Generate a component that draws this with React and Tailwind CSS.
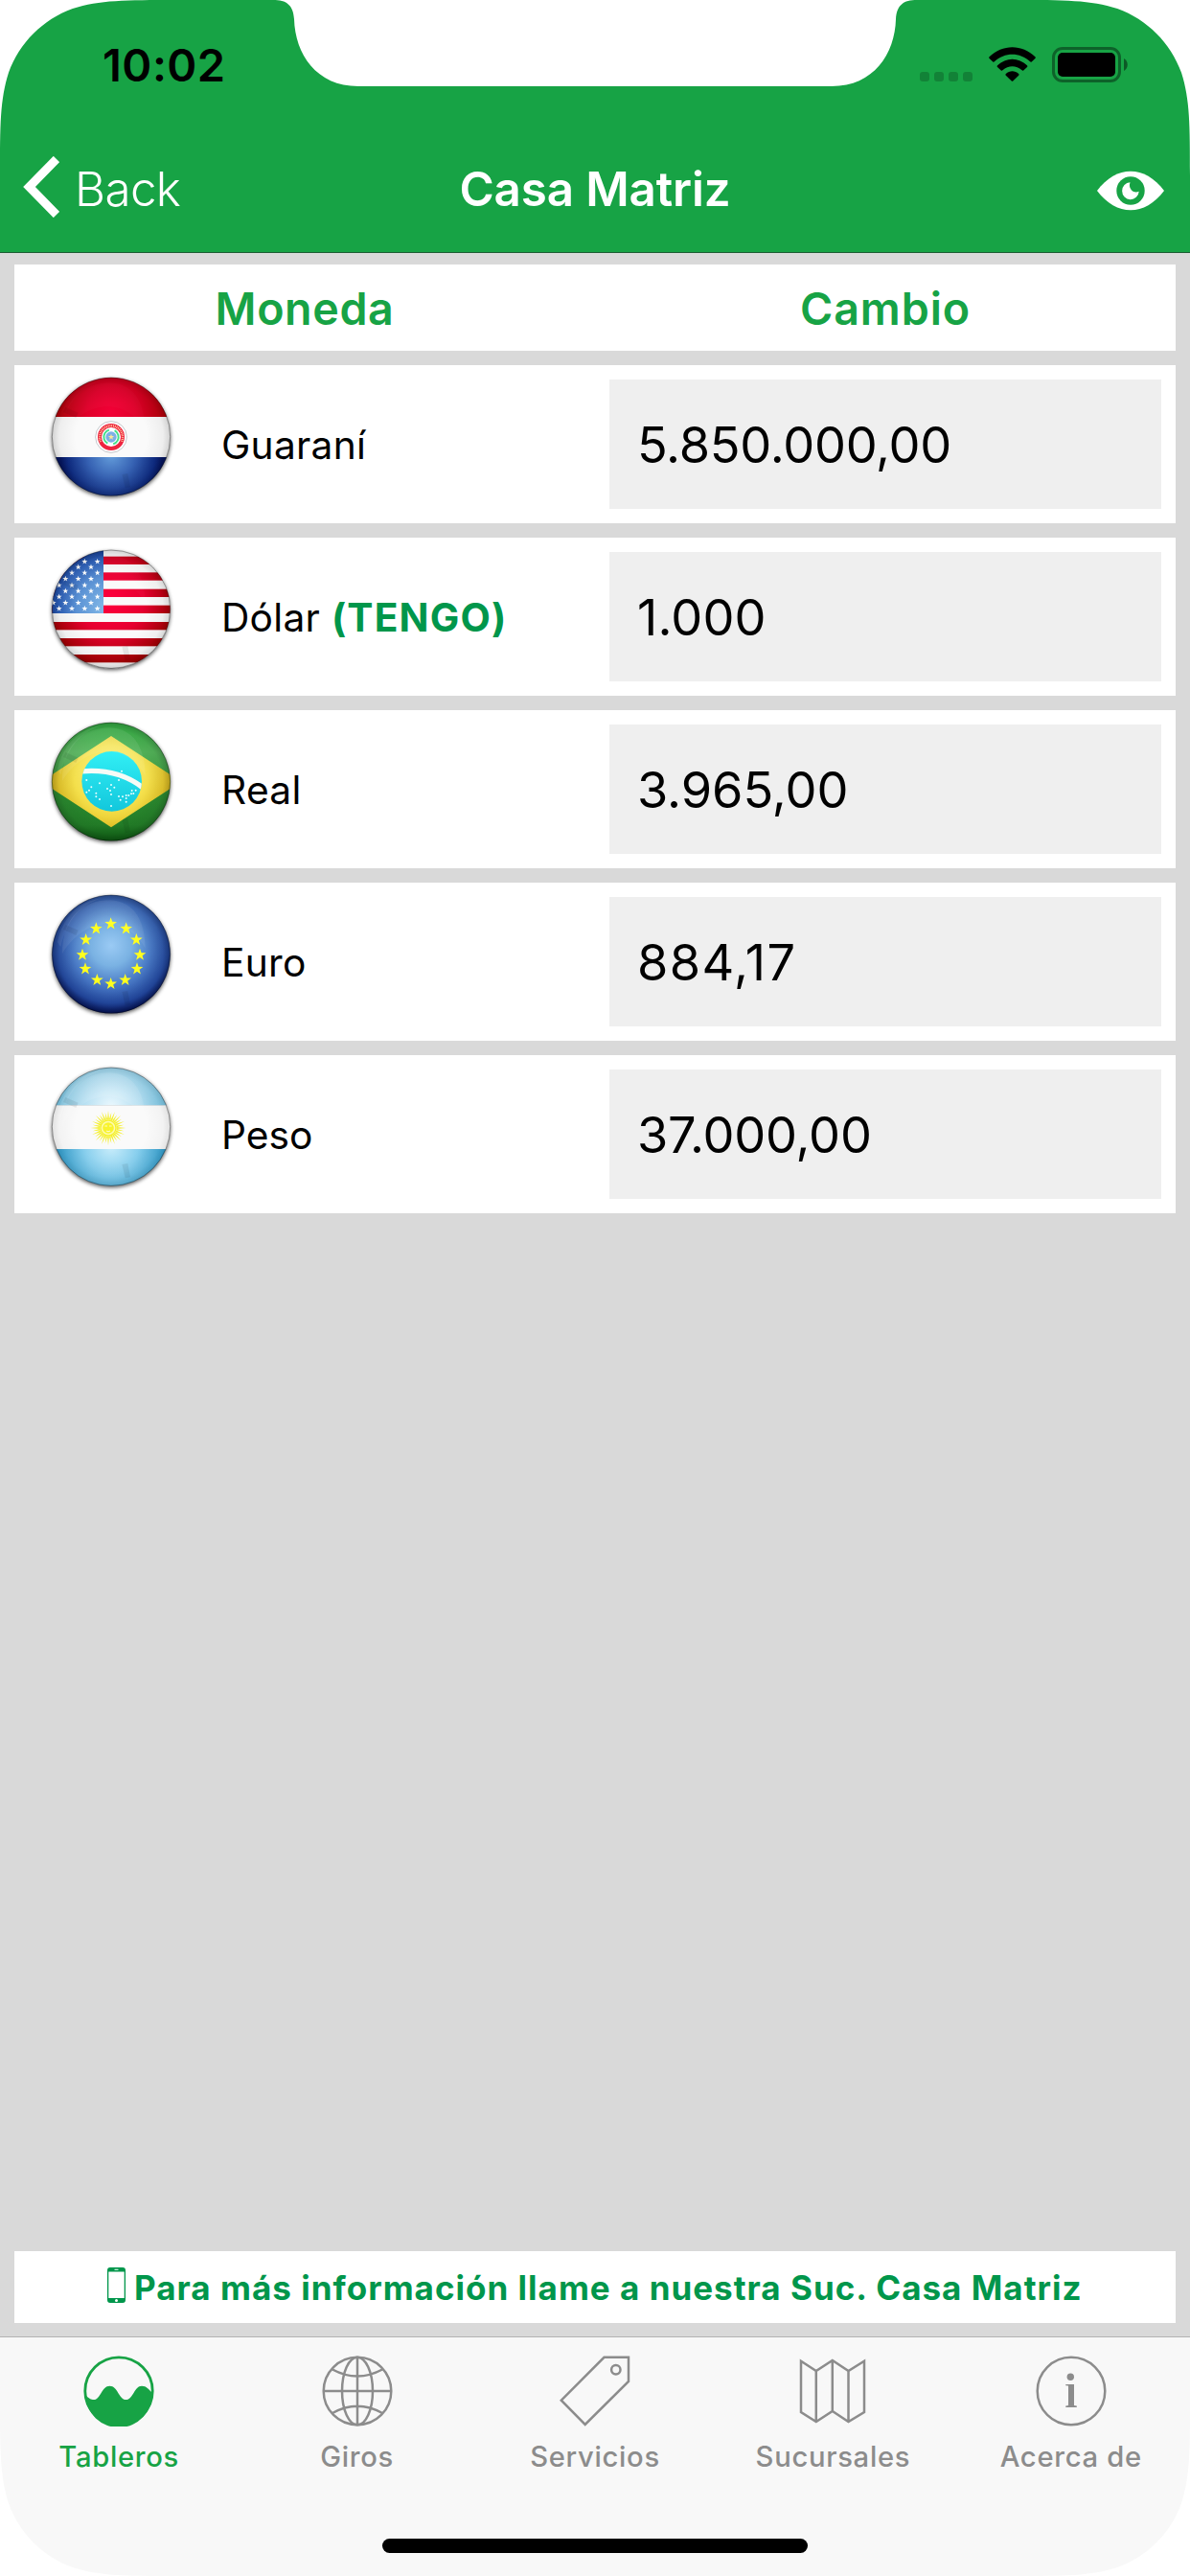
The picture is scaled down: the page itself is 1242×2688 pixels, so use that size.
import React from "react";

const STAR = "M0,-10 L2.35,-3.24 L9.51,-3.09 L3.8,1.24 L5.88,8.09 L0,4 L-5.88,8.09 L-3.8,1.24 L-9.51,-3.09 L-2.35,-3.24Z";

function Star({ x, y, s = 1, fill }) {
  return <path d={STAR} fill={fill} transform={`translate(${x} ${y}) scale(${s})`} />;
}

/* Glossy round badge shared by every flag */
function FlagBadge({ id, rim = 0.5, gloss = 1, children }) {
  return (
    <svg className="-mt-px h-[150px] w-[150px] shrink-0" viewBox="0 0 450 450" aria-hidden="true">
      <defs>
        <clipPath id={`${id}-clip`}>
          <circle cx="228" cy="227" r="185" />
        </clipPath>
        <radialGradient id={`${id}-shade`} cx="0.5" cy="0.5" r="0.5">
          <stop offset="0.6" stopColor="#000" stopOpacity="0" />
          <stop offset="0.88" stopColor="#000" stopOpacity={rim * 0.3} />
          <stop offset="1" stopColor="#000" stopOpacity={rim} />
        </radialGradient>
        <filter id={`${id}-blur`} x="-20%" y="-20%" width="140%" height="140%">
          <feGaussianBlur stdDeviation="7" />
        </filter>
      </defs>
      <circle cx="228" cy="232" r="185" fill="#000" opacity="0.7" filter={`url(#${id}-blur)`} />
      <g clipPath={`url(#${id}-clip)`}>
        {children}
        <circle cx="228" cy="227" r="185" fill={`url(#${id}-shade)`} />
        <g opacity={gloss}>
          <path d="M75,225 C75,110 140,58 225,58 C305,62 335,130 335,210 C290,120 160,90 75,225Z" fill="#fff" opacity="0.1" />
          <path d="M60,190 C75,110 130,60 200,52 C130,72 90,120 70,205Z" fill="#fff" opacity="0.1" />
        </g>
        <path d="M85,135 L125,152 L118,168 L78,150Z M262,345 L280,342 L288,385 L272,388Z" fill="#000" opacity="0.07" />
      </g>
      <circle cx="228" cy="227" r="185" fill="none" stroke="#000" strokeOpacity="0.35" strokeWidth="3" />
    </svg>
  );
}

function Paraguay() {
  return (
    <FlagBadge id="py" rim={0.16} gloss={0.2}>
      <defs>
        <radialGradient id="py-red" gradientUnits="userSpaceOnUse" cx="228" cy="150" r="190">
          <stop offset="0" stopColor="#f20036" />
          <stop offset="0.4" stopColor="#e0002a" />
          <stop offset="1" stopColor="#a80000" />
        </radialGradient>
        <radialGradient id="py-blue" gradientUnits="userSpaceOnUse" cx="228" cy="285" r="160">
          <stop offset="0" stopColor="#649ddb" />
          <stop offset="0.45" stopColor="#3763b4" />
          <stop offset="0.85" stopColor="#0f2c83" />
          <stop offset="1" stopColor="#051560" />
        </radialGradient>
      </defs>
      <rect x="40" y="40" width="380" height="126" fill="url(#py-red)" />
      <rect x="40" y="165" width="380" height="127" fill="#fafafa" />
      <rect x="40" y="291" width="380" height="125" fill="url(#py-blue)" />
      <circle cx="228" cy="228" r="49" fill="#fff" stroke="#b9bcc0" strokeWidth="2.5" />
      <circle cx="228" cy="228" r="36" fill="none" stroke="#ee2440" strokeWidth="12" />
      <path d="M195,243 A36,36 0 1 1 261,243" fill="none" stroke="#ffd9a6" strokeWidth="7" strokeDasharray="2.5 3" />
      <circle cx="228" cy="228" r="23" fill="none" stroke="#45e08a" strokeWidth="6" strokeDasharray="54 18" transform="rotate(-62 228 228)" />
      <circle cx="228" cy="228" r="17" fill="#7eb0e6" />
      <Star x={228} y={228} fill="#ffe79a" />
    </FlagBadge>
  );
}

const US_STARS = [
  [78, [145, 185]],
  [95, [125, 165]],
  [113, [105, 145, 185]],
  [132, [85, 125, 165]],
  [152, [65, 105, 145, 185]],
  [170, [85, 125, 165]],
  [188, [65, 105, 145, 185]],
  [207, [47, 85, 125, 165]],
  [225, [65, 105, 145, 185]],
];

function UnitedStates() {
  return (
    <FlagBadge id="us" rim={0.15} gloss={0.2}>
      <defs>
        <radialGradient id="us-red" gradientUnits="userSpaceOnUse" cx="228" cy="200" r="205">
          <stop offset="0" stopColor="#ff003d" />
          <stop offset="0.5" stopColor="#e60030" />
          <stop offset="1" stopColor="#a00000" />
        </radialGradient>
        <radialGradient id="us-blue" gradientUnits="userSpaceOnUse" cx="215" cy="225" r="190">
          <stop offset="0" stopColor="#86bdea" />
          <stop offset="0.5" stopColor="#5b92d4" />
          <stop offset="0.8" stopColor="#2c5fb8" />
          <stop offset="1" stopColor="#12388f" />
        </radialGradient>
      </defs>
      <rect x="40" y="40" width="380" height="380" fill="#fafafa" />
      {[62, 112, 164, 215, 267, 318, 369].map((y) => (
        <rect key={y} x="40" y={y} width="380" height="25" fill="url(#us-red)" />
      ))}
      <rect x="40" y="40" width="164" height="200" fill="url(#us-blue)" />
      {US_STARS.map(([y, xs]) => xs.map((x) => <Star key={`${x}-${y}`} x={x} y={y} s={0.95} fill="#fff" />))}
    </FlagBadge>
  );
}

const BR_STARS = [
  [261, 194], [252, 222], [151, 222], [192, 232], [228, 237], [238, 245], [216, 249], [225, 255], [166, 244], [159, 254],
  [151, 260], [181, 263], [181, 274], [228, 267], [192, 282], [252, 273], [264, 274], [275, 270], [275, 279], [257, 284],
  [275, 290], [283, 270], [291, 265], [293, 255], [305, 254], [228, 303], [298, 264],
];

function Brazil() {
  return (
    <FlagBadge id="br" rim={0.22} gloss={0.8}>
      <defs>
        <linearGradient id="br-green" x1="0" y1="0" x2="0" y2="1">
          <stop offset="0" stopColor="#35b345" />
          <stop offset="0.25" stopColor="#54b55a" />
          <stop offset="0.6" stopColor="#2c8c31" />
          <stop offset="0.85" stopColor="#237f28" />
          <stop offset="1" stopColor="#0b5910" />
        </linearGradient>
        <radialGradient id="br-yellow" gradientUnits="userSpaceOnUse" cx="228" cy="190" r="200">
          <stop offset="0" stopColor="#fbf38a" />
          <stop offset="0.6" stopColor="#f4e04c" />
          <stop offset="1" stopColor="#e3be1c" />
        </radialGradient>
        <linearGradient id="br-blue" x1="0" y1="0" x2="0" y2="1">
          <stop offset="0" stopColor="#32eff5" />
          <stop offset="1" stopColor="#12c7dc" />
        </linearGradient>
        <clipPath id="br-globe">
          <circle cx="230" cy="226" r="94" />
        </clipPath>
      </defs>
      <rect x="40" y="40" width="380" height="380" fill="url(#br-green)" />
      <path d="M228,84 L447,227 L228,370 L9,227Z" fill="url(#br-yellow)" />
      <circle cx="230" cy="226" r="94" fill="url(#br-blue)" />
      <path d="M132,195 C205,188 270,200 330,248" fill="none" stroke="#f6fbf6" strokeWidth="16" clipPath="url(#br-globe)" />
      {BR_STARS.map(([x, y]) => (
        <circle key={`${x}-${y}`} cx={x} cy={y} r="3" fill="#e9ffff" />
      ))}
    </FlagBadge>
  );
}

const EU_STARS = [
  [227, 132], [275, 147], [307, 182], [318, 229], [309, 273], [272, 308], [227, 320], [184, 308], [147, 273], [138, 229], [149, 182], [181, 147],
];

function Europe() {
  return (
    <FlagBadge id="eu" rim={0.25} gloss={0.7}>
      <defs>
        <radialGradient id="eu-blue" gradientUnits="userSpaceOnUse" cx="228" cy="200" r="212">
          <stop offset="0" stopColor="#9acaf4" />
          <stop offset="0.3" stopColor="#7ab2e3" />
          <stop offset="0.6" stopColor="#4878c4" />
          <stop offset="0.85" stopColor="#2349a2" />
          <stop offset="1" stopColor="#04135f" />
        </radialGradient>
      </defs>
      <rect x="40" y="40" width="380" height="380" fill="url(#eu-blue)" />
      {EU_STARS.map(([x, y]) => (
        <Star key={`${x}-${y}`} x={x} y={y} s={2} fill="#ffff1e" />
      ))}
    </FlagBadge>
  );
}

function Argentina() {
  const rays = Array.from({ length: 32 }, (_, i) => i * 11.25);
  return (
    <FlagBadge id="ar" rim={0.1} gloss={1}>
      <defs>
        <radialGradient id="ar-top" gradientUnits="userSpaceOnUse" cx="228" cy="165" r="180">
          <stop offset="0" stopColor="#eaf8fe" />
          <stop offset="0.5" stopColor="#b3def1" />
          <stop offset="1" stopColor="#6fbedd" />
        </radialGradient>
        <radialGradient id="ar-bottom" gradientUnits="userSpaceOnUse" cx="228" cy="290" r="170">
          <stop offset="0" stopColor="#c9edfb" />
          <stop offset="0.5" stopColor="#86ceed" />
          <stop offset="1" stopColor="#2f9bcb" />
        </radialGradient>
      </defs>
      <rect x="40" y="40" width="380" height="121" fill="url(#ar-top)" />
      <rect x="40" y="160" width="380" height="138" fill="#fafafa" />
      <rect x="40" y="297" width="380" height="120" fill="url(#ar-bottom)" />
      <g transform="translate(219 231)">
        {rays.map((a, i) => (
          <path key={a} d={i % 2 ? "M-2.6,-26 L0,-50 L2.6,-26Z" : "M-2.8,-26 L0,-55 L2.8,-26Z"} fill="#f5f02c" transform={`rotate(${a})`} />
        ))}
        <circle r="24" fill="#fdfbb0" stroke="#f5f02c" strokeWidth="4" />
        <circle r="17.5" fill="#f8f32e" />
        <path d="M-11,-6 h8 M3,-6 h8 M-6,9 q6,4 12,0" stroke="#fdfbc4" strokeWidth="3.5" fill="none" />
      </g>
    </FlagBadge>
  );
}

const ROWS = [
  { name: "Guaraní", nameClass: "tracking-[0.26px]", value: "5.850.000,00", valueClass: "tracking-[-0.27px]", Flag: Paraguay },
  { name: "Dólar", nameClass: "tracking-[0.26px]", own: true, value: "1.000", valueClass: "tracking-[0.13px]", Flag: UnitedStates },
  { name: "Real", nameClass: "tracking-[0.3px]", value: "3.965,00", valueClass: "tracking-[-0.05px]", Flag: Brazil },
  { name: "Euro", nameClass: "tracking-[0.28px]", value: "884,17", valueClass: "tracking-[1.4px]", Flag: Europe },
  { name: "Peso", nameClass: "tracking-normal", value: "37.000,00", valueClass: "tracking-[-0.2px]", Flag: Argentina },
];

function CurrencyRow({ row }) {
  const { Flag } = row;
  return (
    <li className="grid h-[165px] grid-cols-2 bg-white">
      <div className="flex pl-[25px]">
        <Flag />
        <div className="ml-[41px] flex items-center pt-[3px] text-[40.7px] whitespace-pre">
          <span className={row.nameClass}>{row.name}</span>
          {row.own && <span className="ml-px font-bold tracking-[1.15px] text-[#00964b]"> (TENGO)</span>}
        </div>
      </div>
      <div className="p-[15px]">
        <div className="flex h-full items-center bg-[#efefef] pt-px pl-[29px] text-[52.3px]">
          <span className={row.valueClass}>{row.value}</span>
        </div>
      </div>
    </li>
  );
}

function StatusBar() {
  return (
    <div className="flex h-[132px] items-start justify-between pr-[65px] pl-[107px] text-black">
      <span className="mt-11 text-[47px] leading-[48px] font-semibold tracking-[0.5px]">10:02</span>
      <div className="mt-[49px] flex h-[37px] items-end gap-[17px]">
        <div className="mb-px flex gap-[5px]">
          {[0, 1, 2, 3].map((i) => (
            <span key={i} className="h-[10px] w-[10px] rounded-[3px] bg-black/20" />
          ))}
        </div>
        <svg className="mb-px h-9 w-[49px]" viewBox="0 0 49 36" aria-hidden="true">
          <path d="M0.6,10.2 C14,-3.2 35,-3.2 48.4,10.2 Q49.3,11.1 48.4,12 L44.7,15.4 Q43.9,16 43.1,15.3 C32.5,5.3 16.5,5.3 5.9,15.3 Q5.1,16 4.3,15.4 L0.6,12 Q-0.3,11.1 0.6,10.2Z" />
          <path d="M9,19.2 C18,10.5 31,10.5 40,19.2 Q40.9,20.1 40,21 L36.2,24.4 Q35.4,25 34.6,24.3 C28.5,19 20.5,19 14.4,24.3 Q13.6,25 12.8,24.4 L9,21 Q8.1,20.1 9,19.2Z" />
          <path d="M17.8,28 C21.8,24.3 27.2,24.3 31.2,28 Q32,28.9 31.2,29.7 L25.2,35.4 Q24.5,36 23.8,35.4 L17.8,29.7 Q17,28.9 17.8,28Z" />
        </svg>
        <svg className="h-[37px] w-[79px]" viewBox="0 0 79 37" aria-hidden="true">
          <rect x="1.5" y="1.5" width="69" height="34" rx="9.5" fill="none" stroke="#000" strokeOpacity="0.4" strokeWidth="3" />
          <rect x="6" y="6" width="60" height="25" rx="5" />
          <path d="M75,12 C80,14.5 80,22.5 75,25Z" fillOpacity="0.45" />
        </svg>
      </div>
    </div>
  );
}

function NavBar() {
  return (
    <div className="grid h-[131px] grid-cols-3 items-center pr-[27px] pl-6 text-[49.3px] text-white">
      <div className="flex items-center gap-4">
        <svg className="-mt-1.5 h-16 w-[38px]" viewBox="0 0 38 64" fill="none" stroke="#fff" strokeWidth="9" aria-hidden="true">
          <path d="M35,3 L6.5,32 L35,61" />
        </svg>
        <span className="font-[350] tracking-[-0.6px]">Back</span>
      </div>
      <h1 className="pl-[3px] text-center font-semibold tracking-[-0.12px] whitespace-nowrap">Casa Matriz</h1>
      <svg className="mt-[3px] h-[42px] w-[70px] justify-self-end" viewBox="0 0 70 42" aria-hidden="true">
        <path d="M0,21 C20,-6 50,-6 70,21 C50,48 20,48 0,21Z" fill="#fff" />
        <circle cx="35" cy="21" r="14.7" fill="#17a345" />
        <path d="M34.5,12.2 A8.8,9 0 1 0 43.7,21.8 C38,24.5 32,18.5 34.5,12.2Z" fill="#fff" />
      </svg>
    </div>
  );
}

const TABS = [
  {
    label: "Tableros",
    active: true,
    icon: (
      <>
        <circle cx="37" cy="37" r="35.2" strokeWidth="2.8" />
        <path
          d="M2,41 C6,45 8,46 11,46 C18,46 19,31.7 27.5,31.7 C36,31.7 37,46 44.5,46 C52,46 53,31.7 61,31.7 C66,31.7 68,35 72,39 A35,35 0 0 1 2,41Z"
          fill="currentColor"
          stroke="none"
        />
      </>
    ),
  },
  {
    label: "Giros",
    icon: (
      <>
        <circle cx="37" cy="37" r="35.3" />
        <ellipse cx="37" cy="37" rx="16" ry="35.3" />
        <path d="M37,1.5 V72.5 M1.5,37 H72.5 M11,14.5 Q37,28.5 63,14.5 M11,60 Q37,45.5 63,60" />
      </>
    ),
  },
  {
    label: "Servicios",
    icon: (
      <>
        <path d="M46.5,1.8 H72 V27 L26.7,72 L1.8,46.7Z" />
        <circle cx="58.8" cy="14.7" r="4.7" />
      </>
    ),
  },
  {
    label: "Sucursales",
    icon: (
      <path d="M4,5.8 L19.8,16 L36.8,5 L53.5,16 L70,5.8 V59 L53.5,69 L36.8,58 L19.8,69 L4,59Z M19.8,16 V69 M36.8,5 V58 M53.5,16 V69" />
    ),
  },
  {
    label: "Acerca de",
    icon: (
      <>
        <circle cx="37" cy="37" r="35.3" />
        <path d="M31.3,30 H40 V52 L42.8,52.6 V54 H31.3 V52.6 L34,52 V31.6 L31.3,31.2Z" fill="currentColor" stroke="none" />
        <circle cx="36.3" cy="22.3" r="3.7" fill="currentColor" stroke="none" />
      </>
    ),
  },
];

function TabBar() {
  return (
    <footer className="flex h-[250px] flex-col border-t border-[#b2b2b2] bg-[#f8f8f8]">
      <nav className="grid grid-cols-5 pt-[19px]">
        {TABS.map((tab) => (
          <div key={tab.label} className={tab.active ? "flex flex-col items-center text-[#17a345]" : "flex flex-col items-center text-[#8c8c8c]"}>
            <svg className="h-[74px] w-[74px]" viewBox="0 0 74 74" fill="none" stroke="currentColor" strokeWidth="2.5" aria-hidden="true">
              {tab.icon}
            </svg>
            <span className="mt-[14px] text-[29.2px] leading-9 font-medium tracking-[0.7px] whitespace-nowrap">{tab.label}</span>
          </div>
        ))}
      </nav>
      <div className="mx-auto mt-auto mb-6 h-[15px] w-[444px] rounded-full bg-black" />
    </footer>
  );
}

/* White device corners and sensor notch laid over the screen */
function DeviceFrame() {
  const corner = "M0,0 H183.4 C130.6,0 104.2,0 75.8,9 C44.7,20.3 20.3,44.7 9,75.8 C0,104.2 0,130.6 0,183.4Z";
  return (
    <svg className="pointer-events-none absolute inset-0 h-full w-full" viewBox="0 0 1242 2688" fill="#fff" aria-hidden="true">
      <path d={corner} />
      <path d={corner} transform="translate(1242 0) scale(-1 1)" />
      <path d={corner} transform="translate(0 2688) scale(1 -1)" />
      <path d={corner} transform="translate(1242 2688) scale(-1 -1)" />
      <path d="M285,0 C299,0 306,5 307,20 C308,56 330,90 374,90 H868 C912,90 934,56 935,20 C936,5 943,0 957,0Z" />
    </svg>
  );
}

export default function App() {
  return (
    <div className="relative flex h-[2688px] w-[1242px] flex-col overflow-hidden bg-[#d9d9d9] font-['Inter',sans-serif] leading-none text-black">
      <header className="h-[264px] border-b border-[#1c5c33] bg-[#17a345]">
        <StatusBar />
        <NavBar />
      </header>
      <main className="flex flex-1 flex-col px-[15px] pt-3 pb-[14px]">
        <div className="grid h-[90px] grid-cols-2 items-center bg-white pt-0.5 text-center text-[46.6px] font-semibold text-[#17a345]">
          <span className="tracking-[0.6px]">Moneda</span>
          <span className="tracking-[0.9px]">Cambio</span>
        </div>
        <ul className="mt-[15px] flex flex-col gap-[15px]">
          {ROWS.map((row) => (
            <CurrencyRow key={row.name} row={row} />
          ))}
        </ul>
        <div className="mt-auto flex h-[75px] items-center bg-white pl-[97px] text-[35px] font-bold text-[#00964b]">
          <svg className="-mt-1 h-[37px] w-[19px]" viewBox="0 0 19 37" aria-hidden="true">
            <path
              d="M3,0 H16 Q19,0 19,3 V34 Q19,37 16,37 H3 Q0,37 0,34 V3 Q0,0 3,0Z M1.3,4.5 V32 H17.7 V4.5Z M7.5,1.8 V2.8 H11.5 V1.8Z M9.5,33 A1.5,1.5 0 1 0 9.5,36 A1.5,1.5 0 1 0 9.5,33Z"
              fill="currentColor"
              fillRule="evenodd"
            />
          </svg>
          <span className="mt-px ml-[9px] tracking-[1.01px] whitespace-nowrap">Para más información llame a nuestra Suc. Casa Matriz</span>
        </div>
      </main>
      <TabBar />
      <DeviceFrame />
    </div>
  );
}
